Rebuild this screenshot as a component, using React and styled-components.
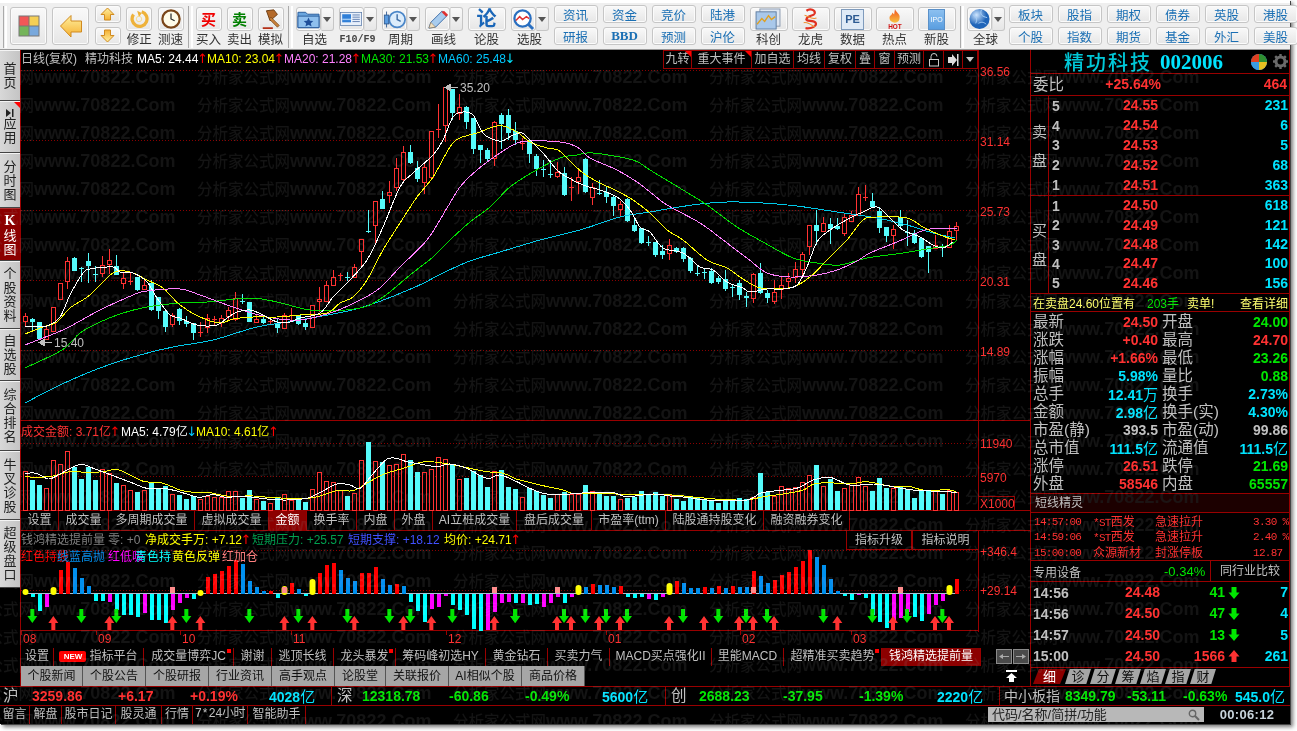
import React from 'react';
import styled, { createGlobalStyle } from 'styled-components';

const CJK = '"Noto Sans CJK SC"';
const SANS = `"Liberation Sans", ${CJK}, sans-serif`;
const RED = '#ff3232';
const CYAN = '#00e4ff';
const GREEN = '#00e600';
const GRAY = '#c0c0c0';
const LINE = '#990000';
const ACTIVE = '#8c0000';

const Global = createGlobalStyle`
  html, body { margin: 0; padding: 0; background: #fff; overflow: hidden; }
  * { box-sizing: border-box; }
`;

const Page = styled.div`
  width: 1297px; height: 731px; background: #fff; position: relative; overflow: hidden;
  font: 12px ${SANS};
`;
const Win = styled.div`
  width: 1290px; height: 724px; background: #000; position: relative;
  display: flex; flex-direction: column;
  box-shadow: 1px 1px 0 #444, 3px 3px 4px #777;
`;

/* ---------- toolbar ---------- */
const Toolbar = styled.div`
  height: 50px; flex: none; background: #efefef; display: flex; gap: 3px; align-items: flex-start;
  padding: 2px 0 0 2px; border-top: 3px solid #fff; border-bottom: 1px solid #999;
`;
const Grip = styled.div`
  width: ${p => p.$w || 5}px; height: 42px; flex: none; margin-top: 1px;
  border-left: 1px solid #aaa; border-right: 2px solid #fff; margin-left: 1px;
`;
const Group = styled.div`display: flex; gap: ${p => p.$gap}px; align-items: flex-start; flex: none;`;
const Btn = styled.div`
  display: flex; align-items: center; justify-content: center; flex: none;
  width: ${p => p.$w}px; height: ${p => p.$h}px;
  background: linear-gradient(#f9f9f9, #e6e6e6);
  border: 1px solid #c6c6c6; border-radius: 3px; box-shadow: inset 0 0 0 1px #fbfbfb;
`;
const BigBtn = styled(Btn)`margin-top: 2px;`;
const Stack = styled.div`display: flex; flex-direction: column; gap: 4px; flex: none;`;
const Labeled = styled.div`
  display: flex; flex-direction: column; align-items: center; flex: none; width: ${p => p.$w}px; padding-top: 2px;
`;
const IconRow = styled.div`display: flex; width: 100%;`;
const Split = styled.div`
  width: 13px; height: 24px; border: 1px solid #c6c6c6; border-left-color: #ddd; border-radius: 0 3px 3px 0;
  background: linear-gradient(#f9f9f9, #e6e6e6); display: flex; align-items: center; justify-content: center;
  &::after { content: ''; border: 4px solid transparent; border-top: 5px solid #555; border-bottom: 0; }
`;
const ToolLabel = styled.div`
  font: 12.5px/16px ${SANS}; color: #333; white-space: nowrap; margin-top: 1px;
  ${p => p.$mono && `font: bold 10px/16px "Liberation Mono", monospace; color: #444;`}
`;
const LinkBtn = styled(Btn)`
  color: #1a6fb4; font: 12.5px ${SANS};
  ${p => p.$bold && `font: bold 13px "Liberation Serif", serif;`}
`;
const GlyphIcon = styled.span`
  font: bold ${p => p.$s || 15}px/1 ${SANS}; color: ${p => p.$c};
`;

const FolderIcon = () => (
  <svg width="24" height="20" viewBox="0 0 24 20"><path d="M1 3h8l2 2h12v14H1z" fill="#6aa6de" stroke="#2a5c9c"/><path d="M1 7h22v12H1z" fill="#8fc0ee" stroke="#2a5c9c"/><path d="M12 8.5l1.5 3.2 3.5.4-2.6 2.3.8 3.4-3.2-1.8-3.2 1.8.8-3.4L7 12.1l3.5-.4z" fill="#1f4f9a"/></svg>
);
const DocIcon = () => (
  <svg width="22" height="18" viewBox="0 0 30 19"><rect x=".5" y=".5" width="29" height="18" fill="#e8f0fb" stroke="#5a7aa8"/><rect x="3" y="3" width="12" height="11" fill="#2f7fd8"/><path d="M3 9h12v2H3z" fill="#9cc8f4"/><path d="M17 4h10M17 7h10M17 10h10M17 13h10" stroke="#3a5f9a"/></svg>
);
const CycleIcon = () => (
  <svg width="24" height="21" viewBox="0 0 26 22"><circle cx="16" cy="11" r="9" fill="#dcecfb" stroke="#4a86c8" strokeWidth="2"/><path d="M16 5v6l4 2" stroke="#3f6fa8" strokeWidth="1.6" fill="none"/><path d="M4 2v18" stroke="#305a90"/><rect x="1.5" y="6" width="5" height="10" fill="#5a9be0" stroke="#305a90"/></svg>
);
const PenIcon = () => (
  <svg width="23" height="21" viewBox="0 0 24 22"><path d="M3 20l2-6L17 2l5 5L10 19z" fill="#a8ccee" stroke="#3f6ea8"/><path d="M16 3l5 5 2-2-4-4z" fill="#e03030"/><path d="M3 20l2-6 5 5z" fill="#f0e0c0" stroke="#7a6040" strokeWidth=".5"/></svg>
);
const ScreenIcon = () => (
  <svg width="23" height="21" viewBox="0 0 24 22"><circle cx="11" cy="10" r="8.5" fill="#fff" stroke="#2a6fc0" strokeWidth="2.4"/><path d="M4 12l4-4 3 3 4-3 3 2" stroke="#e03030" strokeWidth="1.5" fill="none"/><path d="M17 16l5 5" stroke="#2a6fc0" strokeWidth="3"/></svg>
);
const ArrowLeft = () => (
  <svg width="24" height="24" viewBox="0 0 24 24"><defs><linearGradient id="ya" x1="0" y1="0" x2="0" y2="1"><stop offset="0" stopColor="#fff0a0"/><stop offset="1" stopColor="#f5b030"/></linearGradient></defs><path d="M1.5 12L12 1.5V7h10.5v11H12v5z" fill="url(#ya)" stroke="#d08a20"/></svg>
);
const ArrowV = ({ down }) => (
  <svg width="15" height="14" viewBox="0 0 15 14" style={down ? { transform: 'rotate(180deg)' } : undefined}><path d="M7.5 1L14 7.5H10.5V13h-6V7.5H1z" fill="url(#ya)" stroke="#d08a20"/></svg>
);
const Refresh = () => (
  <svg width="20" height="20" viewBox="0 0 22 22"><path d="M14 3a8.2 8.2 0 1 1-9 3" fill="none" stroke="#eeb23a" strokeWidth="3.6"/><path d="M9 2l5 2.5-3 4.5z" fill="#eeb23a"/><circle cx="11" cy="11" r="3" fill="none" stroke="#f7d98a"/></svg>
);
const Clock = () => (
  <svg width="20" height="20" viewBox="0 0 22 22"><circle cx="11" cy="11" r="9.5" fill="#fffbe8" stroke="#7a4518" strokeWidth="2.4"/><path d="M11 5v6l4 2" stroke="#222" strokeWidth="1.3" fill="none"/></svg>
);
const Hammer = () => (
  <svg width="22" height="22" viewBox="0 0 24 24"><path d="M7 3l8-1 4 5-8 7z" fill="#b46a2a" stroke="#6a3a10"/><path d="M12 10l9 9-2 2-9-9z" fill="#c8803a" stroke="#6a3a10" strokeWidth=".7"/><path d="M3 21h11v2H3z" fill="#b43018"/></svg>
);
const ChartPic = () => (
  <svg width="27" height="22" viewBox="0 0 28 23"><rect x="5" y="1" width="21" height="18" fill="#dfe7f2" stroke="#8a9ab0"/><rect x="1" y="4" width="21" height="18" fill="#a9c8ea" stroke="#607da0"/><path d="M2 17l5-6 3 3 4-6 3 4 4-3" stroke="#e0a020" strokeWidth="1.4" fill="none"/></svg>
);
const Dragon = () => (
  <svg width="22" height="22" viewBox="0 0 24 24" fill="none"><path d="M7 3c4-3 10-1 9 3-1 3-8 2-9 6-1 3 8 1 10 4 2 4-5 7-11 6" stroke="#e03020" strokeWidth="2.4"/><path d="M5 8c4 1 8 5 13 3M4 16c5-1 8 2 12 5" stroke="#f09030" strokeWidth="1.2"/></svg>
);
const Doc = styled.div`
  width: 23px; height: 21px; background: #dfeaf6; border: 1px solid #7f9bbc; display: flex; align-items: center; justify-content: center;
  span { font: bold 11px "Liberation Sans", sans-serif; color: #2c5a92; }
`;
const IpoDoc = styled(Doc)`
  width: 17px; background: linear-gradient(#8cc0f0, #5a9ee0); border-color: #5a90c8;
  span { font: 7px "Liberation Sans", sans-serif; color: #fff; }
`;
const PeDoc = () => <Doc><span>PE</span></Doc>;
const Flame = () => (
  <svg width="22" height="22" viewBox="0 0 24 24"><defs><linearGradient id="fl" x1="0" y1="0" x2="0" y2="1"><stop offset="0" stopColor="#f05020"/><stop offset="1" stopColor="#f8c040"/></linearGradient></defs><path d="M12 1c1 4 6 5 5 10 0 3-2 5-5 5s-6-2-6-5c0-3 3-3 3-6 1 1 2 2 2 2z" fill="url(#fl)"/><text x="12" y="23" textAnchor="middle" fontSize="7" fontWeight="bold" fontFamily="Liberation Sans" fill="#d01010">HOT</text></svg>
);
const Globe = () => (
  <svg width="21" height="22" viewBox="0 0 22 23"><defs><radialGradient id="gb" cx=".35" cy=".3"><stop offset="0" stopColor="#cfe6ff"/><stop offset="1" stopColor="#1f64b8"/></radialGradient></defs><circle cx="11" cy="11.5" r="10.5" fill="url(#gb)"/><path d="M4 7c4 2 5 5 3 9M13 2c-2 5 1 7 6 8M10 16c3-2 6-1 8 1" stroke="#a8d0f8" fill="none"/></svg>
);
const Swatch = () => (
  <svg width="22" height="22" viewBox="0 0 22 22"><rect x=".5" y=".5" width="21" height="21" fill="#777"/><rect x="1.5" y="1.5" width="9" height="9" fill="#f25757"/><rect x="11.5" y="1.5" width="9" height="9" fill="#f5cf55"/><rect x="1.5" y="11.5" width="9" height="9" fill="#74b45a"/><rect x="11.5" y="11.5" width="9" height="9" fill="#78a8dc"/></svg>
);

const Tool = ({ label, w = 26, dd, mono, children }) => (
  <Labeled $w={w}>
    <IconRow>
      <Btn $w={dd ? w - 13 : w} $h={24}>{children}</Btn>
      {dd && <Split />}
    </IconRow>
    <ToolLabel $mono={mono}>{label}</ToolLabel>
  </Labeled>
);
const Links = ({ a, b }) => (
  <Stack>
    <LinkBtn $w={44} $h={18}>{a}</LinkBtn>
    <LinkBtn $w={44} $h={18} $bold={b === 'BBD'}>{b}</LinkBtn>
  </Stack>
);

const TopBar = () => (
  <Toolbar>
    <Grip $w={4} />
    <Group $gap={5.4}>
      <BigBtn $w={37} $h={38}><Swatch /></BigBtn>
      <BigBtn $w={37} $h={38}><ArrowLeft /></BigBtn>
      <Stack>
        <Btn $w={26} $h={18}><ArrowV /></Btn>
        <Btn $w={26} $h={18}><ArrowV down /></Btn>
      </Stack>
      <Tool label="修正"><Refresh /></Tool>
      <Tool label="测速"><Clock /></Tool>
    </Group>
    <Grip />
    <Group $gap={5}>
      <Tool label="买入"><GlyphIcon $c="#f00000">买</GlyphIcon></Tool>
      <Tool label="卖出"><GlyphIcon $c="#008000">卖</GlyphIcon></Tool>
      <Tool label="模拟"><Hammer /></Tool>
    </Group>
    <Grip />
    <Group $gap={5}>
      <Tool label="自选" w={38} dd><FolderIcon /></Tool>
      <Tool label="F10/F9" w={38} dd mono><DocIcon /></Tool>
      <Tool label="周期" w={38} dd><CycleIcon /></Tool>
      <Tool label="画线" w={38} dd><PenIcon /></Tool>
      <Tool label="论股" w={38}><GlyphIcon $c="#1a66b8" $s={20}>论</GlyphIcon></Tool>
      <Tool label="选股" w={38} dd><ScreenIcon /></Tool>
      <Links a="资讯" b="研报" />
      <Links a="资金" b="BBD" />
      <Links a="竞价" b="预测" />
      <Links a="陆港" b="沪伦" />
      <Group $gap={4}>
        <Tool label="科创" w={38}><ChartPic /></Tool>
        <Tool label="龙虎" w={38}><Dragon /></Tool>
        <Tool label="数据" w={38}><PeDoc /></Tool>
        <Tool label="热点" w={38}><Flame /></Tool>
        <Tool label="新股" w={38}><IpoDoc><span>IPO</span></IpoDoc></Tool>
      </Group>
    </Group>
    <Grip $w={4} />
    <Group $gap={4}>
      <Tool label="全球" w={38} dd><Globe /></Tool>
      <Group $gap={5}>
        <Links a="板块" b="个股" />
        <Links a="股指" b="指数" />
        <Links a="期权" b="期货" />
        <Links a="债券" b="基金" />
        <Links a="英股" b="外汇" />
        <Links a="港股" b="美股" />
      </Group>
    </Group>
  </Toolbar>
);

/* ---------- data ---------- */
const C = [
['r',316,321,313,327],['c',319,322,318,331],['c',322,339,322,340],['r',329,339,327,340],['r',307,331,307,332],['r',283,299,283,299],['r',261,281,257,289],['c',258,271,257,271],['c',268,268,267,282],['c',261,266,253,283],['c',274,274,266,282],['r',265,273,256,277],['r',260,264,249,274],['c',266,275,255,275],['r',278,283,273,289],['r',281,281,273,285],['c',277,290,277,291],['r',285,289,279,290],['c',283,310,280,311],['c',297,311,297,319],
['c',311,327,310,332],['r',315,324,313,327],['c',309,321,308,325],['c',321,324,316,327],['c',323,333,323,340],['r',332,332,322,337],['r',318,327,314,333],['r',319,319,316,325],['r',318,322,315,327],['r',310,316,307,320],['r',298,319,292,321],['c',301,301,294,304],['c',302,322,302,322],['r',319,322,314,323],['c',319,323,315,324],['r',321,321,318,325],['c',323,328,319,333],['r',315,328,313,329],['r',315,315,308,320],['c',315,324,315,325],
['c',323,327,318,330],['r',305,327,305,328],['r',299,301,287,312],['r',285,301,281,301],['r',277,285,270,285],['r',275,275,273,281],['c',277,277,272,281],['r',267,277,264,277],['r',239,251,239,267],['c',231,231,210,233],['r',201,225,201,243],['c',199,209,191,209],['r',192,195,181,203],['r',168,187,158,191],['r',152,179,146,183],['c',152,163,145,164],['c',168,179,161,182],['r',167,182,163,194],['r',131,177,131,177],['r',129,129,104,138],
['r',87,125,87,142],['c',89,113,89,120],['r',107,113,94,120],['c',107,122,106,129],['c',118,149,118,154],['c',145,150,145,163],['c',150,159,148,162],['r',122,158,121,166],['c',115,124,113,149],['c',115,133,109,140],['c',131,140,122,145],['r',143,143,138,150],['c',141,154,140,163],['c',156,169,154,176],['c',169,169,160,177],['c',174,174,160,178],['r',172,176,162,178],['c',173,195,167,196],['r',187,187,177,201],['r',177,181,169,194],
['c',159,192,158,193],['r',187,197,183,205],['c',193,193,180,195],['c',192,197,187,203],['c',197,206,196,216],['r',204,209,201,217],['c',199,221,198,222],['c',225,231,217,232],['c',228,243,228,244],['c',242,242,236,246],['c',242,255,242,257],['c',251,255,245,259],['r',245,253,239,260],['c',248,252,247,253],['c',248,259,247,262],['c',258,271,257,273],['c',273,273,266,276],['c',272,272,269,279],['c',271,283,268,284],['c',278,282,276,284],
['c',279,289,270,291],['c',287,287,285,297],['c',283,295,280,300],['c',296,298,292,307],['r',274,298,273,303],['c',273,293,263,294],['c',293,298,290,303],['r',292,301,280,304],['r',285,289,277,299],['r',278,281,273,287],['r',269,277,262,283],['r',254,269,252,276],['r',225,246,225,255],['c',225,231,210,245],['r',223,231,217,232],['c',224,229,218,244],['c',226,229,218,230],['r',217,233,213,236],['r',215,221,211,222],['r',194,215,187,215],
['r',197,197,185,201],['c',201,207,193,208],['c',211,228,207,233],['c',227,236,227,242],['r',229,235,225,249],['c',217,226,210,227],['c',232,232,220,246],['c',233,243,230,244],['c',238,257,237,258],['c',246,252,246,273],['r',245,248,235,249],['c',247,247,244,257],['r',231,247,225,248],['r',226,230,222,241],
];
const VOL = [154,180,195,205,121,132,94,140,177,141,180,148,158,189,195,210,216,210,190,208,198,222,225,237,228,236,228,232,232,213,214,233,210,237,243,250,235,222,240,238,245,208,157,183,186,210,228,219,121,66,124,126,135,132,103,120,156,157,148,110,118,135,178,174,153,165,201,152,150,201,208,232,203,212,225,234,222,215,222,222,195,212,218,228,228,238,233,230,213,224,216,228,226,237,243,232,235,238,240,249,240,243,234,238,232,159,217,228,198,204,202,186,166,135,198,176,212,204,195,172,198,212,174,204,204,198,207,234,212,212,212,222,210,216];
const MA5 = [25,326,37,326,47,326,60,317,70,295,83,273,90,269,113,267,120,272,133,273,147,282,157,298,170,315,180,318,197,325,217,325,227,318,237,312,250,310,263,315,277,322,290,322,300,318,320,313,333,297,347,283,367,260,383,227,400,187,413,173,433,155,443,140,453,117,463,112,473,115,483,133,492,139,502,141,513,135,522,133,530,140,543,153,557,170,567,177,583,185,600,190,617,197,630,210,640,227,650,232,663,248,683,253,700,267,713,270,727,282,743,288,750,292,767,289,783,289,797,285,807,267,817,242,830,230,850,218,863,212,877,207,890,218,903,230,920,237,933,245,943,248,953,242];
const MA10 = [25,334,43,327,57,322,70,308,90,295,113,273,130,272,147,280,163,288,180,305,200,317,220,323,233,319,253,317,277,317,300,315,327,313,340,303,353,297,367,280,383,250,400,223,417,197,433,177,450,147,460,138,477,133,493,127,503,126,517,132,530,142,547,148,558,150,567,158,583,173,600,183,617,191,633,200,650,213,667,230,683,240,707,260,727,268,740,277,757,287,773,289,793,287,810,277,827,260,847,240,863,220,877,217,907,218,923,227,940,235,955,240];
const MA20 = [25,345,43,338,67,328,100,310,133,295,147,291,180,289,200,295,233,307,267,317,300,320,333,312,360,300,380,288,400,267,427,240,447,208,460,187,477,170,500,153,517,143,530,141,560,142,577,147,590,158,617,170,637,182,650,192,667,205,700,223,727,243,747,258,767,273,790,277,817,275,837,270,857,261,870,253,897,242,917,233,930,229,957,228];
const MA30 = [25,368,62,350,80,333,100,322,123,313,147,307,180,303,207,302,250,298,277,302,300,308,320,311,360,308,383,297,410,275,433,257,450,240,470,222,490,207,510,187,533,172,560,158,577,155,593,153,633,160,650,170,683,190,707,205,737,227,763,242,793,258,817,263,840,265,867,258,903,253,933,248,950,245,957,240];
const MA60 = [25,403,60,385,100,368,140,355,173,347,213,340,257,327,300,320,360,308,413,288,443,273,470,261,500,252,540,240,580,230,620,217,650,212,673,208,700,204,727,202,763,203,797,206,837,212,877,218,907,225,933,233,955,238];
const z11 = a => a.map((v, i) => i % 2 ? 420 + v / 3 : 20 + v / 3);
const z12 = a => a.map((v, i) => i % 2 ? 420 + v / 3 : 520 + v / 3);
const VMA5 = [...z11([16,160,50,160,85,177,115,165,150,145,185,133,220,145,260,160,300,175,340,190,380,205,430,205,470,213,510,225,540,232,580,224,620,232,660,228,700,232,750,238,800,240,860,235,900,218,950,192,990,195,1020,205,1060,160,1100,118,1130,115,1160,125,1200,132,1250,140,1290,132,1340,145,1400,175,1440,165,1490,185]), ...z12([0,190,30,205,80,222,150,222,200,218,280,218,320,230,400,222,450,228,500,232,560,240,680,240,720,220,770,212,830,205,880,180,930,172,990,195,1060,192,1100,197,1180,210,1280,215,1310,218])];
const VMA10 = [...z11([16,170,50,172,100,168,150,155,200,157,250,155,290,148,330,165,370,184,430,190,480,210,530,218,570,218,620,228,700,228,760,233,860,235,900,228,950,212,1000,212,1040,190,1090,163,1150,145,1215,125,1290,133,1350,145,1400,155,1450,160,1490,178]), ...z12([0,180,60,195,130,210,160,220,250,220,330,224,440,224,530,232,600,238,680,240,730,230,790,222,850,210,890,190,1000,190,1040,185,1110,198,1170,200,1210,210,1290,210,1310,218])];
const MACD = [
['y',268],['c',292],['c',332],['m',320],['y',262],['r',210],['r',185],['b',205],['b',235],['b',258],['c',302],['c',304],['m',305],['c',330],['c',345],['c',345],['c',352],['m',338],['c',360],['c',360],['c',368],['m',330],['m',310],['m',295],['c',298],['y',270],['r',230],['r',222],['r',212],['r',198],['r',180],['b',192],['b',244],['b',262],['b',272],['r',272],['c',293],['y',258],['r',250],['b',268],['c',288],['y',238],['r',218],['r',195],['r',190],['b',210],['b',235],['b',242],['r',220],['r',218],['r',202],['b',238],['b',255],['r',252],['b',258],['c',305],['c',332],['c',365],['m',328],['m',322],['m',288],['c',315],['c',330],['c',345],['c',388],['c',392],['m',390],['m',335],['m',310],['m',307],
['c',310],['m',308],['c',315],['c',312],['m',320],['m',310],['m',292],['c',308],['m',290],['y',255],['b',260],['r',252],['b',256],['b',255],['b',262],['r',258],['c',290],['c',293],['c',290],['m',296],['c',300],['m',290],['y',250],['r',243],['b',248],['b',264],['b',264],['r',260],['b',264],['r',258],['b',264],['r',258],['b',260],['b',260],['r',213],['b',228],['b',250],['r',240],['r',225],['r',215],['r',200],['r',183],['r',150],['b',170],['b',195],['b',238],['b',272],['c',288],['c',300],['m',285],['c',293],['c',345],['c',365],['c',385],['m',365],['m',355],['m',335],['c',352],['c',362],['m',342],['m',315],['m',303],['y',255],['r',238],
];
const MACD_COL = { r: '#ff0000', b: '#0090ee', c: '#00ffff', m: '#ff00ff' };
const SQUARES = [21, 37, 67, 76, 104, 125];
const GREEN_ARROWS = [...[97,244,349,559,748,895,1042,1168,1231,1357,1546].map(v => v / 3), ...[15,162,226,288,351,519,625,708,771,940,1087,1191,1297].map(v => 510 + v / 3)];
const RED_ARROWS = [...[160,328,517,601,853,937,1063,1210,1294,1483].map(v => v / 3), ...[141,183,267,330,477,582,687,729,792,982,1149,1275,1317].map(v => 510 + v / 3)];
const DATES = [['08',21],['09',96],['10',180],['11',291],['12',446],['01',606],['02',740],['03',851]];

const smooth = a => {
  const p = [];
  for (let i = 0; i < a.length; i += 2) p.push([a[i], a[i + 1]]);
  let d = `M${p[0][0]} ${p[0][1]}`;
  for (let i = 0; i < p.length - 1; i++) {
    const p0 = p[i - 1] || p[i], p1 = p[i], p2 = p[i + 1], p3 = p[i + 2] || p2;
    d += `C${(p1[0] + (p2[0] - p0[0]) / 6).toFixed(1)} ${(p1[1] + (p2[1] - p0[1]) / 6).toFixed(1)} ${(p2[0] - (p3[0] - p1[0]) / 6).toFixed(1)} ${(p2[1] - (p3[1] - p1[1]) / 6).toFixed(1)} ${p2[0]} ${p2[1]}`;
  }
  return d;
};

/* ---------- chart panes ---------- */
const Center = styled.div`width: 1009px; flex: none; display: flex; flex-direction: column;`;
const Pane = styled.div`position: relative; height: ${p => p.$h}px; flex: none;`;
const ChartSvg = styled.svg`
  display: block; position: absolute; inset: 0;
  text { font: 12px "Liberation Sans", "Noto Sans CJK SC", sans-serif; }
`;
const Ma = ({ d, c }) => <path d={smooth(d)} fill="none" stroke={c} strokeWidth="1" shapeRendering="crispEdges" />;
const Dotted = ({ y, x2 = 978 }) => <line x1="21" x2={x2} y1={y + .5} y2={y + .5} stroke="#8a0000" strokeDasharray="1 2" shapeRendering="crispEdges" />;
const AxisText = ({ y, children, x = 980 }) => <text x={x} y={y + 4.5} fill={RED}>{children}</text>;

const Candle = ({ i }) => {
  const [c, t, b, h, l] = C[i];
  const x = 25 + 7 * i;
  const col = c === 'r' ? RED : '#55fbfb';
  return (
    <g shapeRendering="crispEdges">
      <line x1={x + .5} x2={x + .5} y1={h} y2={l} stroke={col} />
      {t === b
        ? <line x1={x - 2} x2={x + 3} y1={t + .5} y2={t + .5} stroke={col} />
        : c === 'r'
          ? <rect x={x - 1.5} y={t + .5} width="4" height={b - t} fill="#000" stroke={col} />
          : <rect x={x - 2} y={t} width="5" height={b - t} fill={col} />}
    </g>
  );
};

const KlineSvg = () => (
  <ChartSvg width="1009" height="371" viewBox="21 50 1009 371">
    {[70, 140, 210, 280, 350].map(y => <Dotted key={y} y={y} />)}
    <line x1="978.5" x2="978.5" y1="50" y2="421" stroke={LINE} shapeRendering="crispEdges" />
    <line x1="21" x2="1030" y1="420.5" y2="420.5" stroke={LINE} shapeRendering="crispEdges" />
    {C.map((_, i) => <Candle key={i} i={i} />)}
    <Ma d={MA60} c="#00c8e8" />
    <Ma d={MA30} c="#00dd00" />
    <Ma d={MA20} c="#ff80ff" />
    <Ma d={MA10} c="#ffff00" />
    <Ma d={MA5} c="#ffffff" />
    <path d="M445 87.5h13M445 87.5l5-3v6z" stroke={GRAY} fill={GRAY} shapeRendering="crispEdges" />
    <text x="460" y="92" fill={GRAY}>35.20</text>
    <path d="M39 342.5h13M39 342.5l5-3v6z" stroke={GRAY} fill={GRAY} shapeRendering="crispEdges" />
    <text x="54" y="347" fill={GRAY}>15.40</text>
    <AxisText y={71}>36.56</AxisText>
    <AxisText y={141}>31.14</AxisText>
    <AxisText y={211}>25.73</AxisText>
    <AxisText y={281}>20.31</AxisText>
    <AxisText y={351}>14.89</AxisText>
  </ChartSvg>
);
const VolSvg = () => (
  <ChartSvg width="1009" height="90" viewBox="21 421 1009 90">
    <Dotted y={443} /><Dotted y={476} />
    <line x1="978.5" x2="978.5" y1="421" y2="511" stroke={LINE} shapeRendering="crispEdges" />
    <line x1="21" x2="1030" y1="510.5" y2="510.5" stroke={LINE} shapeRendering="crispEdges" />
    {VOL.map((v, i) => {
      const x = 25 + 7 * i, top = Math.round(420 + v / 3);
      return C[i][0] === 'r'
        ? <rect key={i} x={x - 1.5} y={top + .5} width="4" height={510 - top} fill="#000" stroke={RED} shapeRendering="crispEdges" />
        : <rect key={i} x={x - 2} y={top} width="5" height={510 - top} fill="#55fbfb" shapeRendering="crispEdges" />;
    })}
    <Ma d={VMA10} c="#ffff00" />
    <Ma d={VMA5} c="#ffffff" />
    <AxisText y={443}>11940</AxisText>
    <AxisText y={477}>5970</AxisText>
    <rect x="978.5" y="496.5" width="36" height="14" fill="none" stroke={LINE} shapeRendering="crispEdges" />
    <text x="980" y="508" fill={RED}>X1000</text>
  </ChartSvg>
);
const MacdSvg = () => (
  <ChartSvg width="1009" height="117" viewBox="21 531 1009 117">
    <Dotted y={550} /><Dotted y={590} />
    <line x1="978.5" x2="978.5" y1="531" y2="632" stroke={LINE} shapeRendering="crispEdges" />
    <line x1="21" x2="979" y1="630.5" y2="630.5" stroke={LINE} shapeRendering="crispEdges" />
    {DATES.map(([t, x]) => (
      <g key={t}>
        <line x1={x + .5} x2={x + .5} y1="631" y2="635" stroke={LINE} shapeRendering="crispEdges" />
        <text x={x + 2} y="643" fill={RED}>{t}</text>
      </g>
    ))}
    <line x1="25" x2="958" y1="593.5" y2="593.5" stroke="#a8c0d0" shapeRendering="crispEdges" />
    {MACD.map(([k, v], i) => {
      const x = 25 + 7 * i, y = Math.round(500 + v / 3);
      if (k === 'y') return <rect key={i} x={x - 2.5} y={y} width="6" height={Math.max(6, 595 - y)} rx="3" fill="#ffff00" />;
      return y < 593
        ? <rect key={i} x={x - 1.5} y={y} width="4" height={594 - y} fill={MACD_COL[k]} shapeRendering="crispEdges" />
        : <rect key={i} x={x - 1.5} y="594" width="4" height={y - 594} fill={MACD_COL[k]} shapeRendering="crispEdges" />;
    })}
    {SQUARES.map(i => <rect key={i} x={25 + 7 * i - 2} y="587" width="5" height="6" fill="#ff8c8c" shapeRendering="crispEdges" />)}
    {GREEN_ARROWS.map((x, i) => <path key={i} transform={`translate(${x} 609)`} d="M-2 0h4v7h3l-5 7-5-7h3z" fill={GREEN} />)}
    {RED_ARROWS.map((x, i) => <path key={i} transform={`translate(${x} 616)`} d="M-2 14h4v-7h3l-5-7-5 7h3z" fill={RED} />)}
    <g>
      <text x="21" y="561" fill="#ff0000">红色持股</text>
      <text x="57" y="561" fill="#0090ee">线蓝高抛</text>
      <text x="108" y="561" fill="#ff00ff">红低吸</text>
      <text x="135" y="561" fill="#00ffff">青色持</text>
      <text x="172" y="561" fill="#ffff00">黄色反弹</text>
      <text x="222" y="561" fill="#ff8080">红加仓</text>
    </g>
    <AxisText y={551}>+346.4</AxisText>
    <AxisText y={590}>+29.14</AxisText>
  </ChartSvg>
);

/* overlays on the chart panes */
const Legend = styled.div`
  position: absolute; left: 0; top: ${p => p.$t}px; display: flex; align-items: center; white-space: nowrap;
  font: 12px/14px ${SANS}; height: 16px; z-index: 2;
`;
const LegendItem = styled.span`color: ${p => p.$c}; flex: none; display: inline-flex; align-items: center; ${p => p.$w && `width:${p.$w}px;`}`;
const Up = styled.span`
  color: ${p => p.$c || '#f00'}; font: 13px/14px "DejaVu Sans", sans-serif; display: inline-block; width: 6px; flex: none;
  text-indent: -2.5px; margin-left: 1px;
`;
const ChartTools = styled.div`
  position: absolute; top: 0; right: 52px; display: flex; height: 19px; z-index: 2;
`;
const ChartTool = styled.div`
  position: relative; width: ${p => p.$w}px; height: 19px; color: ${GRAY}; border: 1px solid ${LINE}; border-left-width: ${p => p.$first ? 1 : 0}px;
  font: 12px/17px ${SANS}; text-align: center; display: flex; align-items: center; justify-content: center;
  ${p => p.$flag && `&::after { content:''; position:absolute; right:0; top:0; border-top:6px solid #f00; border-left:6px solid transparent; }`}
`;
const PanelBtns = styled.div`position: absolute; top: 0; right: 52px; display: flex; z-index: 2;`;
const PanelBtn = styled.div`
  width: 66px; height: 19px; border: 1px solid ${LINE}; border-top: 0; border-right: ${p => p.$last ? 0 : 1}px solid ${LINE}; color: ${GRAY}; font: 12px/18px ${SANS}; text-align: center;
`;

const TabRow = styled.div`
  display: flex; height: ${p => p.$h}px; flex: none; position: relative;
  border-bottom: ${p => p.$plain ? 'none' : `1px solid ${LINE}`};
`;
const Tab = styled.div`
  width: ${p => p.$w}px; flex: none; color: ${p => p.$on ? '#fff' : GRAY}; background: ${p => p.$on ? ACTIVE : 'transparent'};
  border-right: 1px solid ${LINE}; font: 12px/${p => p.$h}px ${SANS}; text-align: center; white-space: nowrap; position: relative;
  ${p => p.$flag && `&::after { content:''; position:absolute; right:2px; top:1px; width:4px; height:4px; background:#f00; }`}
`;
const NewTag = styled.span`
  display: inline-block; width: 27px; height: 11px; background: #f00; color: #fff; border-radius: 2px; margin-right: 3px;
  font: bold 8px/11px "Liberation Sans", sans-serif; text-align: center; vertical-align: 1px;
`;
const ScrollBtn = styled.div`
  position: absolute; top: 1px; left: ${p => p.$l}px; width: 16px; height: 15px; background: #4a4a4a; border: 1px solid #8a8a8a;
  display: flex; align-items: center; justify-content: center;
`;
const GrayTab = styled.div`
  width: ${p => p.$w}px; flex: none; height: 20px; background: #a6a6a6; color: #111; font: 12px/20px ${SANS}; text-align: center; white-space: nowrap;
  border-right: 1px solid #555;
`;
const NewsRow = styled.div`
  display: flex; height: 21px; flex: none; position: relative;
`;
const PinIcon = styled.svg`position: absolute; right: 12px; top: 3px;`;

const mainTabs = [['设置',38],['成交量',50],['多周期成交量',86],['虚拟成交量',74],['金额',38,1],['换手率',50],['内盘',38],['外盘',38],['AI立桩成交量',84],['盘后成交量',75],['市盈率(ttm)',74],['陆股通持股变化',98],['融资融券变化',86]];
const indTabs = [['设置',33],['指标平台',90,0,0,1],['成交量博弈JC',90,0,1],['谢谢',38],['逃顶长线',62],['龙头暴发',62,0,1],['筹码峰初选HY',90],['黄金钻石',62],['买卖力气',62],['MACD买点强化II',102],['里能MACD',72],['超精准买卖趋势',98,0,1],['钱鸿精选提前量',99,1]];
const newsTabs = [['个股新闻',62],['个股公告',63],['个股研报',63],['行业资讯',63],['高手观点',63],['论股堂',51],['关联报价',63],['AI相似个股',73],['商品价格',63]];
const toolItems = [['九转',29,1],['重大事件',60,1],['加自选',42],['均线',31],['复权',31],['叠',19],['窗',20],['预测',29]];

const CenterColumn = () => (
  <Center>
    <Pane $h={371}>
      <KlineSvg />
      <Legend $t={1}>
        <LegendItem $c={GRAY} $w={64}>日线(复权)</LegendItem>
        <LegendItem $c={GRAY} $w={52}>精功科技</LegendItem>
        <LegendItem $c="#ffffff" $w={70}>MA5: 24.44<Up>↑</Up></LegendItem>
        <LegendItem $c="#ffff00" $w={77}>MA10: 23.04<Up>↑</Up></LegendItem>
        <LegendItem $c="#ff80ff" $w={77}>MA20: 21.28<Up>↑</Up></LegendItem>
        <LegendItem $c="#00e600" $w={77}>MA30: 21.53<Up>↑</Up></LegendItem>
        <LegendItem $c="#00c8ff">MA60: 25.48<Up $c="#00e4ff">↓</Up></LegendItem>
      </Legend>
      <ChartTools>
        {toolItems.map(([t, w, f], i) => <ChartTool key={t} $w={w} $flag={f} $first={i === 0}>{t}</ChartTool>)}
        <ChartTool $w={20}>
          <svg width="12" height="14" viewBox="0 0 12 14"><path d="M3 6V3.5a3 3 0 0 1 6 0" fill="none" stroke="#ccc" /><rect x="1.5" y="6.5" width="9" height="6.5" fill="none" stroke="#ccc" /></svg>
        </ChartTool>
        <ChartTool $w={19}>
          <svg width="12" height="12" viewBox="0 0 12 12"><path d="M1 3h4V0l5 6-5 6V9H1z" fill="#ddd" /><rect x="10" y="0" width="1.5" height="12" fill="#ddd" /></svg>
        </ChartTool>
        <ChartTool $w={15}>
          <svg width="8" height="5" viewBox="0 0 8 5"><path d="M0 0h8L4 5z" fill="#ccc" /></svg>
        </ChartTool>
      </ChartTools>
    </Pane>
    <Pane $h={90}>
      <VolSvg />
      <Legend $t={3}>
        <LegendItem $c={RED} $w={100}>成交金额: 3.71亿<Up>↑</Up></LegendItem>
        <LegendItem $c="#ffffff" $w={75}>MA5: 4.79亿<Up $c="#00c8ff">↓</Up></LegendItem>
        <LegendItem $c="#ffff00">MA10: 4.61亿<Up>↑</Up></LegendItem>
      </Legend>
    </Pane>
    <TabRow $h={20}>
      {mainTabs.map(([t, w, on]) => <Tab key={t} $w={w} $on={on} $h={19}>{t}</Tab>)}
    </TabRow>
    <Pane $h={117}>
      <MacdSvg />
      <Legend $t={1}>
        <LegendItem $c="#808080" $w={87}>钱鸿精选提前量</LegendItem>
        <LegendItem $c="#808080" $w={37}>零: +0</LegendItem>
        <LegendItem $c="#ffff00" $w={107}>净成交手万: +7.12<Up>↑</Up></LegendItem>
        <LegendItem $c="#00a050" $w={96}>短期压力: +25.57</LegendItem>
        <LegendItem $c="#4050ff" $w={96}>短期支撑: +18.12</LegendItem>
        <LegendItem $c="#ffff00">均价: +24.71<Up>↑</Up></LegendItem>
      </Legend>
      <PanelBtns>
        <PanelBtn>指标升级</PanelBtn>
        <PanelBtn $last>指标说明</PanelBtn>
      </PanelBtns>
    </Pane>
    <TabRow $h={18} $plain>
      {indTabs.map(([t, w, on, flag, isNew]) => <Tab key={t} $w={w} $on={on} $flag={flag} $h={17}>{isNew ? <NewTag>NEW</NewTag> : null}{t}</Tab>)}
      <ScrollBtn $l={975}><svg width="10" height="7" viewBox="0 0 10 7"><path d="M0 3.5L4 1v2h6v1H4v2z" fill="#aaa" /></svg></ScrollBtn>
      <ScrollBtn $l={992}><svg width="10" height="7" viewBox="0 0 10 7"><path d="M10 3.5L6 1v2H0v1h6v2z" fill="#aaa" /></svg></ScrollBtn>
    </TabRow>
    <NewsRow>
      {newsTabs.map(([t, w]) => <GrayTab key={t} $w={w}>{t}</GrayTab>)}
      <PinIcon width="13" height="13" viewBox="0 0 13 13"><path d="M1 1h11v2H1zM6.5 4L12 9H9v4H4V9H1z" fill="#fff" /></PinIcon>
    </NewsRow>
  </Center>
);

/* ---------- sidebar ---------- */
const Sidebar = styled.div`
  width: 21px; flex: none; background: #000; border-right: 1px solid ${LINE}; display: flex; flex-direction: column;
`;
const SideTab = styled.div`
  height: ${p => p.$h}px; flex: none; width: 20px; position: relative; padding: 0 3px;
  background: ${p => p.$on ? ACTIVE : 'linear-gradient(90deg,#d8d8d8,#c4c4c4)'};
  color: ${p => p.$on ? '#fff' : '#222'}; border-top: 1px solid ${p => p.$on ? '#b03030' : '#f4f4f4'}; border-bottom: 1px solid #444;
  font: 13px/14px ${SANS}; display: flex; flex-direction: column; align-items: center; justify-content: center; text-align: center;
  ${p => p.$flag && `&::after { content:''; position:absolute; right:0; top:0; border-top:6px solid #f00; border-left:6px solid transparent; }`}
`;
const SideK = styled.span`font: bold 14px "Liberation Serif", serif;`;

const Side = () => {
  const tabs = [['首页',51],['应用',52,0,1],['分时图',55],['K线图',53,1],['个股资料',68],['自选股',52],['综合排名',70],['牛叉诊股',69],['超级盘口',68]];
  return (
    <Sidebar>
      {tabs.map(([t, h, on, flag]) => (
        <SideTab key={t} $h={h} $on={on} $flag={flag}>
          {flag && <svg width="8" height="8" viewBox="0 0 8 8"><path d="M0 0l5 4-5 4zM6 0h1.5v8H6z" fill="#222" /></svg>}
          {[...t].map((ch, i) => ch === 'K' ? <SideK key={i}>K</SideK> : <span key={i}>{ch}</span>)}
        </SideTab>
      ))}
    </Sidebar>
  );
};

/* ---------- right panel ---------- */
const Right = styled.div`
  flex: 1; min-width: 0; display: flex; flex-direction: column; border-left: 1px solid ${LINE}; border-right: 1px solid ${LINE}; color: ${GRAY};
`;
const Section = styled.div`height: ${p => p.$h}px; flex: none; border-bottom: 1px solid ${LINE}; position: relative;`;
const Title = styled.div`
  height: 24px; flex: none; display: flex; align-items: center; padding: 0 0 0 33px; gap: 8px;
  border-bottom: 1px solid ${LINE}; white-space: nowrap;
`;
const TitleName = styled.span`font: 500 20px/24px ${CJK}, sans-serif; letter-spacing: 2px; color: #00c8d8;`;
const TitleCode = styled.span`font: bold 21px/24px "Liberation Serif", serif; color: #00e4ff;`;
const TitleIcons = styled.div`display: flex; gap: 6px; margin-left: 20px; align-items: center;`;
const Num = styled.span`font: bold 14px/1 "Liberation Sans", sans-serif; color: ${p => p.$c || GRAY}; white-space: nowrap;`;
const Unit = styled.span`font: 15px/1 ${SANS};`;
const RatioRow = styled(Section)`display: grid; grid-template-columns: 42px 86px 1fr; align-items: center; padding: 0 2px;`;
const Big = styled.span`font: 15.5px/1 ${SANS}; color: ${GRAY};`;
const IndexName = styled.span`font: 14px/1 ${SANS}; color: ${GRAY};`;
const End = styled.div`text-align: right;`;
const Book = styled(Section)`display: flex;`;
const BookSide = styled.div`
  width: 18px; flex: none; border-right: 1px solid ${LINE}; display: flex; flex-direction: column; align-items: center; justify-content: center;
  gap: 12px; font: 15px/17px ${SANS}; color: ${GRAY};
`;
const BookRows = styled.div`flex: 1; display: flex; flex-direction: column; justify-content: space-around; padding: 0 1px 0 3px;`;
const BookRow = styled.div`display: grid; grid-template-columns: 16px 90px 1fr; align-items: center; height: 19.6px;`;
const Alert = styled(Section)`
  display: grid; grid-template-columns: 114px 40px 53px 1fr; align-items: center; padding-left: 2px; color: #ffff70; font: 12px ${SANS}; white-space: nowrap;
`;
const AlertGreen = styled.span`color: ${GREEN};`;
const Stats = styled(Section)`display: flex; flex-direction: column; padding: 1px 1px 0 2px;`;
const StatRow = styled.div`display: grid; grid-template-columns: 125px 1fr; column-gap: 4px; height: 18.1px; white-space: nowrap;`;
const StatPair = styled.div`display: flex; align-items: center; justify-content: space-between;`;
const ElfHead = styled(Section)`background: #1c0000; font: 12px/18px ${SANS}; padding-left: 4px;`;
const Elf = styled(Section)`display: flex; flex-direction: column; padding-top: 1px;`;
const ElfRow = styled.div`
  display: grid; grid-template-columns: 59px 62px 1fr 36px; height: 16px; padding-left: 3px; color: ${RED}; white-space: nowrap; overflow: hidden;
  font: 12px/16px ${SANS};
`;
const Mono = styled.span`font: 11px/16px "Liberation Mono", monospace; letter-spacing: -.7px;`;
const Industry = styled(Section)`display: flex; align-items: center; padding-left: 2px;`;
const IndName = styled.span`font: 12px ${SANS}; width: 131px;`;
const IndCell = styled.span`width: 46px; font: 13px "Liberation Sans", sans-serif; color: ${GREEN};`;
const IndBtn = styled.div`flex: 1; text-align: center; height: 100%; border-left: 1px solid ${LINE}; font: 12px/20px ${SANS};`;
const Ticks = styled(Section)`display: flex; flex-direction: column; justify-content: space-around; padding: 0 1px 0 2px;`;
const TickRow = styled.div`display: grid; grid-template-columns: 50px 77px 65px 16px 1fr; align-items: center; height: 21px;`;
const TickArrow = ({ up }) => (
  <svg width="12" height="12" viewBox="0 0 12 12" style={{ marginLeft: 3 }}>
    {up ? <path d="M6 0l5.5 6.5H8.5V12h-5V6.5H.5z" fill={RED} /> : <path d="M6 12L.5 5.5h3V0h5v5.5h3z" fill={GREEN} />}
  </svg>
);
const Shapes = styled.div`height: 19px; flex: none; display: flex; padding: 1px 0 0 2px;`;
const Shape = styled.div`
  width: ${p => p.$on ? 33 : 26}px; height: 15px; margin-left: ${p => p.$on ? 0 : -1}px; background: ${p => p.$on ? ACTIVE : '#a6a6a6'}; color: ${p => p.$on ? '#fff' : '#111'};
  font: 13px/15px ${SANS}; text-align: center; clip-path: polygon(18% 0, 100% 0, 82% 100%, 0 100%);
`;

const V = (s, c) => {
  const m = s.match(/^(.*?)([万亿]?)$/);
  return <Num $c={c}>{m[1]}{m[2] && <Unit>{m[2]}</Unit>}</Num>;
};

const RightPanel = () => {
  const sell = [['5','24.55','231'],['4','24.54','6'],['3','24.53','5'],['2','24.52','68'],['1','24.51','363']];
  const buy = [['1','24.50','618'],['2','24.49','121'],['3','24.48','142'],['4','24.47','100'],['5','24.46','156']];
  const stats = [
    ['最新','24.50',RED,'开盘','24.00',GREEN],['涨跌','+0.40',RED,'最高','24.70',RED],['涨幅','+1.66%',RED,'最低','23.26',GREEN],
    ['振幅','5.98%',CYAN,'量比','0.88',GREEN],['总手','12.41万',CYAN,'换手','2.73%',CYAN],['金额','2.98亿',CYAN,'换手(实)','4.30%',CYAN],
    ['市盈(静)','393.5',GRAY,'市盈(动)','99.86',GRAY],['总市值','111.5亿',CYAN,'流通值','111.5亿',CYAN],['涨停','26.51',RED,'跌停','21.69',GREEN],['外盘','58546',RED,'内盘','65557',GREEN],
  ];
  const ticks = [['14:56','24.48','41',0,'7'],['14:56','24.50','47',0,'4'],['14:57','24.50','13',0,'5'],['15:00','24.50','1566',1,'261']];
  return (
    <Right>
      <Title>
        <TitleName>精功科技</TitleName>
        <TitleCode>002006</TitleCode>
        <TitleIcons>
          <svg width="16" height="16" viewBox="0 0 16 16"><circle cx="8" cy="8" r="8" fill="#3a9be0" /><path d="M8 8V0a8 8 0 0 1 8 8z" fill="#2f8f30" /><path d="M8 8h8a8 8 0 0 1-8 8z" fill="#e8c020" /><path d="M8 8v8A8 8 0 0 1 0 8z" fill="#3a9be0" /><path d="M8 8H0a8 8 0 0 1 8-8z" fill="#e04020" /></svg>
          <svg width="15" height="15" viewBox="0 0 15 15"><circle cx="7.5" cy="7.5" r="4.5" fill="none" stroke="#6a6a6a" strokeWidth="3" /><path d="M7.5 0v3M7.5 12v3M0 7.5h3M12 7.5h3M2.2 2.2l2 2M10.8 10.8l2 2M2.2 12.8l2-2M10.8 4.2l2-2" stroke="#6a6a6a" strokeWidth="2.4" /></svg>
        </TitleIcons>
      </Title>
      <RatioRow $h={22}>
        <Big>委比</Big>
        <End><Num $c={RED}>+25.64%</Num></End>
        <End><Num $c={RED}>464</Num></End>
      </RatioRow>
      <Book $h={100}>
        <BookSide><span>卖</span><span>盘</span></BookSide>
        <BookRows>
          {sell.map(([a, b, c]) => <BookRow key={a}><Num>{a}</Num><End><Num $c={RED}>{b}</Num></End><End><Num $c={CYAN}>{c}</Num></End></BookRow>)}
        </BookRows>
      </Book>
      <Book $h={98}>
        <BookSide><span>买</span><span>盘</span></BookSide>
        <BookRows>
          {buy.map(([a, b, c]) => <BookRow key={a}><Num>{a}</Num><End><Num $c={RED}>{b}</Num></End><End><Num $c={CYAN}>{c}</Num></End></BookRow>)}
        </BookRows>
      </Book>
      <Alert $h={18}>
        <span>在卖盘24.60位置有</span><AlertGreen>203手</AlertGreen><span>卖单!</span><span>查看详细</span>
      </Alert>
      <Stats $h={182}>
        {stats.map(([a, b, c, d, e, f]) => (
          <StatRow key={a}>
            <StatPair><Big>{a}</Big>{V(b, c)}</StatPair>
            <StatPair><Big>{d}</Big>{V(e, f)}</StatPair>
          </StatRow>
        ))}
      </Stats>
      <ElfHead $h={19}>短线精灵</ElfHead>
      <Elf $h={48}>
        {[['14:57:00','*ST','西发','急速拉升','3.30 %'],['14:59:06','*ST','西发','急速拉升','2.40 %'],['15:00:00','','众源新材','封涨停板','12.87']].map(([t, a, b, c, d]) => (
          <ElfRow key={t}><Mono>{t}</Mono><span><Mono>{a}</Mono>{b}</span><span>{c}</span><Mono>{d}</Mono></ElfRow>
        ))}
      </Elf>
      <Industry $h={21}>
        <IndName>专用设备</IndName>
        <IndCell>-0.34%</IndCell>
        <IndBtn>同行业比较</IndBtn>
      </Industry>
      <Ticks $h={86}>
        {ticks.map(([t, p, v, up, l], i) => (
          <TickRow key={i}>
            <Num>{t}</Num>
            <End><Num $c={RED}>{p}</Num></End>
            <End><Num $c={up ? RED : GREEN}>{v}</Num></End>
            <TickArrow up={up} />
            <End><Num $c={CYAN}>{l}</Num></End>
          </TickRow>
        ))}
      </Ticks>
      <Shapes>
        {['细','诊','分','筹','焰','指','财'].map((t, i) => <Shape key={t} $on={i === 0}>{t}</Shape>)}
      </Shapes>
    </Right>
  );
};

/* ---------- bottom ---------- */
const Main = styled.div`display: flex; height: 637px; flex: none; border-bottom: 1px solid ${LINE};`;
const IndexBar = styled.div`display: flex; height: 19px; flex: none; border-bottom: 1px solid ${LINE}; background: #000;`;
const IndexCell = styled.div`
  flex: none; width: ${p => p.$w}px; display: grid; grid-template-columns: ${p => p.$cols}; align-items: center; padding-left: ${p => p.$pl}px;
  border-right: ${p => p.$last ? 0 : 1}px solid ${LINE}; white-space: nowrap;
`;
const StatusBar = styled.div`display: flex; flex: 1; min-height: 0; align-items: stretch; background: #000;`;
const StatusTab = styled.div`
  width: ${p => p.$w}px; flex: none; color: ${GRAY}; border-right: 1px solid ${LINE}; font: 12px/17px ${SANS}; text-align: center;
  ${p => p.$mono && `font-family: "Liberation Mono", "Noto Sans CJK SC", monospace; letter-spacing:-.4px;`}
`;
const Search = styled.div`
  margin-left: auto; width: 216px; background: #b8b8b8; color: #222; font: 13px/15px ${SANS}; display: flex; align-items: center; justify-content: space-between;
  padding: 0 4px; height: 15px; margin-top: 1px; white-space: nowrap;
`;
const Timer = styled.div`
  width: 86px; flex: none; text-align: center; color: #c8d4dc; font: bold 13px/17px "Liberation Sans", sans-serif; letter-spacing: .3px;
`;

const Watermark = styled.div`
  position: absolute; left: 0; top: 65px; right: 0; bottom: 0; overflow: hidden; pointer-events: none; z-index: 5;
  mix-blend-mode: lighten; display: flex; flex-direction: column;
`;
const WmRow = styled.div`height: 28px; flex: none; display: flex; margin-left: -59px; white-space: nowrap;`;
const WmItem = styled.span`
  width: 256px; flex: none; color: #141414; font: bold 18px/22px "Liberation Sans", sans-serif;
  b { font: 500 15.5px/22px ${CJK}, sans-serif; }
`;
const rows = Array.from({ length: 24 }, (_, i) => i);
const cols = [0, 1, 2, 3, 4];

const Cap = ({ s }) => <Num $c={CYAN}>{s.slice(0, -1)}<Unit>{s.slice(-1)}</Unit></Num>;

export default function App() {
  return (
    <Page>
      <Global />
      <Win>
        <TopBar />
        <Main>
          <Side />
          <CenterColumn />
          <RightPanel />
        </Main>
        <IndexBar>
          <IndexCell $w={332} $pl={3} $cols="29px 86px 72px 79px 1fr">
            <Big>沪</Big><Num $c={RED}>3259.86</Num><Num $c={RED}>+6.17</Num><Num $c={RED}>+0.19%</Num><Cap s="4028亿" />
          </IndexCell>
          <IndexCell $w={334} $pl={5} $cols="25px 87px 76px 77px 1fr">
            <Big>深</Big><Num $c={GREEN}>12318.78</Num><Num $c={GREEN}>-60.86</Num><Num $c={GREEN}>-0.49%</Num><Cap s="5600亿" />
          </IndexCell>
          <IndexCell $w={334} $pl={5} $cols="28px 84px 76px 78px 1fr">
            <Big>创</Big><Num $c={GREEN}>2688.23</Num><Num $c={GREEN}>-37.95</Num><Num $c={GREEN}>-1.39%</Num><Cap s="2220亿" />
          </IndexCell>
          <IndexCell $w={290} $pl={4} $last $cols="61px 62px 56px 52px 1fr">
            <IndexName>中小板指</IndexName><Num $c={GREEN}>8349.79</Num><Num $c={GREEN}>-53.11</Num><Num $c={GREEN}>-0.63%</Num><Cap s="545.0亿" />
          </IndexCell>
        </IndexBar>
        <StatusBar>
          {[['留言',30],['解盘',32],['股市日记',54],['股灵通',46],['行情',31],['7*24小时',55,1],['智能助手',58]].map(([t, w, m]) => <StatusTab key={t} $w={w} $mono={m}>{t}</StatusTab>)}
          <Search>
            <span>代码/名称/简拼/功能</span>
            <svg width="12" height="12" viewBox="0 0 12 12"><circle cx="4.5" cy="4.5" r="3.2" fill="none" stroke="#666" strokeWidth="1.4" /><path d="M7 7l4 4" stroke="#666" strokeWidth="2" /></svg>
          </Search>
          <Timer>00:06:12</Timer>
        </StatusBar>
        <Watermark aria-hidden="true">
          {rows.map(r => (
            <WmRow key={r}>
              {cols.map(c => <WmItem key={c}><b>分析家公式网</b>www.70822.Com</WmItem>)}
            </WmRow>
          ))}
        </Watermark>
      </Win>
    </Page>
  );
}
